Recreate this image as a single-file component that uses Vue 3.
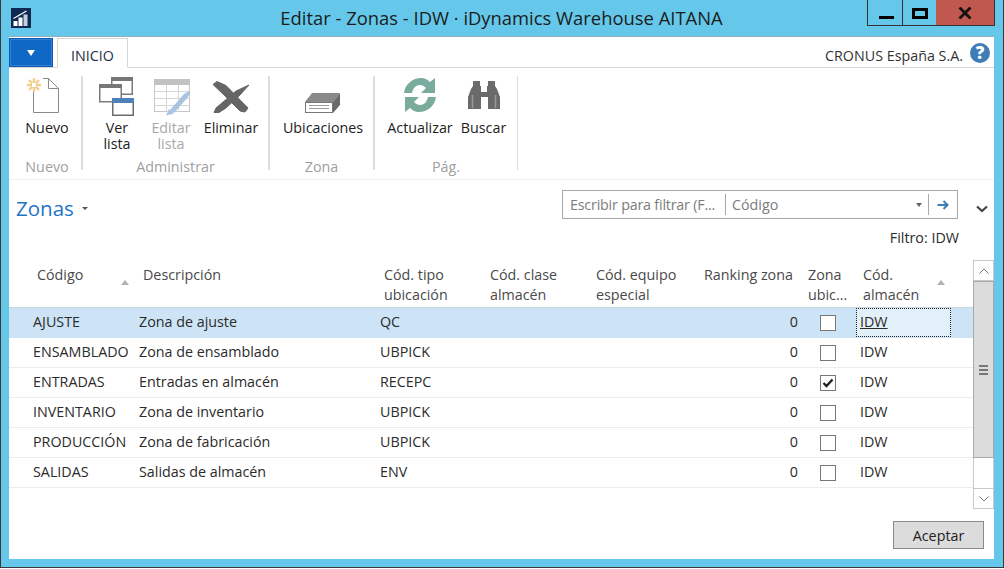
<script setup>
const columns = [
  { key: 'code', lines: ['Código'], sorted: true },
  { key: 'desc', lines: ['Descripción'] },
  { key: 'type', lines: ['Cód. tipo', 'ubicación'] },
  { key: 'class', lines: ['Cód. clase', 'almacén'] },
  { key: 'equip', lines: ['Cód. equipo', 'especial'] },
  { key: 'rank', lines: ['Ranking zona'] },
  { key: 'zone', lines: ['Zona', 'ubic...'] },
  { key: 'store', lines: ['Cód.', 'almacén'], sorted: true }
]

const rows = [
  { code: 'AJUSTE', desc: 'Zona de ajuste', type: 'QC', checked: false },
  { code: 'ENSAMBLADO', desc: 'Zona de ensamblado', type: 'UBPICK', checked: false },
  { code: 'ENTRADAS', desc: 'Entradas en almacén', type: 'RECEPC', checked: true },
  { code: 'INVENTARIO', desc: 'Zona de inventario', type: 'UBPICK', checked: false },
  { code: 'PRODUCCIÓN', desc: 'Zona de fabricación', type: 'UBPICK', checked: false },
  { code: 'SALIDAS', desc: 'Salidas de almacén', type: 'ENV', checked: false }
]
</script>

<template>
  <div class="window">
    <header class="titlebar">
      <svg class="app-icon" viewBox="0 0 20 20" width="20" height="20" aria-hidden="true">
        <rect width="20" height="20" fill="#0f2a52" />
        <path d="M2.500 18v-5h4v5zM7.500 18V9.500h4V18z" fill="#fff" />
        <path d="M12.500 18V6.500h4V18z" fill="#c3cfdd" />
        <path d="M2.500 10.500 15.500 3" stroke="#fff" stroke-width="1.200" fill="none" />
      </svg>
      <span class="title">Editar - Zonas - IDW · iDynamics Warehouse AITANA</span>
      <div class="win-buttons">
        <button type="button" class="win-btn win-min"><span></span></button>
        <button type="button" class="win-btn win-max"><span></span></button>
        <button type="button" class="win-btn win-close">
          <svg viewBox="0 0 14 12" width="14" height="12" aria-hidden="true">
            <path d="M1.500 0.500 12.500 11.500M12.500 0.500 1.500 11.500" stroke="#111" stroke-width="2.800" fill="none" />
          </svg>
        </button>
      </div>
    </header>

    <main class="client">
      <div class="tabstrip">
        <button type="button" class="file-btn"><i></i></button>
        <div class="tab">INICIO</div>
        <div class="company">CRONUS España S.A.</div>
        <div class="help">?</div>
      </div>

      <section class="ribbon">
        <div class="group group-new">
          <div class="group-items">
            <div class="cmd cmd-new">
              <svg viewBox="0 -2 34 40" width="34" height="40" aria-hidden="true">
                <path d="M16 .5H21.500L31.500 10.500V34.500H6.500V14" fill="#fff" stroke="#8a8a8a" />
                <path d="M21.500 .5V10.500H31.500" fill="none" stroke="#8a8a8a" />
                <path d="M7 0v14M0 7h14M2 2l10 10M12 2 2 12" stroke="#f3cf8f" stroke-width="2.400" fill="none" />
                <rect x="5" y="5" width="4" height="4" fill="#fff" />
              </svg>
              <span>Nuevo</span>
            </div>
          </div>
          <div class="group-label">Nuevo</div>
        </div>

        <div class="group group-admin">
          <div class="group-items">
            <div class="cmd cmd-view">
              <svg viewBox="0 0 36 40" width="36" height="40" aria-hidden="true">
                <path d="M12.750 1.750h20.500v16.500h-20.500z" fill="#fff" stroke="#7a7a7a" stroke-width="1.500" />
                <rect x="12" y="1" width="22" height="4" fill="#777" />
                <path d="M.75 8.750h21.500v17H.75z" fill="#fff" stroke="#7a7a7a" stroke-width="1.500" />
                <rect y="8" width="23" height="4" fill="#777" />
                <path d="M13.750 22.750h20.500v16.500h-20.500z" fill="#fff" stroke="#6d6d6d" stroke-width="1.500" />
                <rect x="13" y="22" width="22" height="5" fill="#4e81b8" />
              </svg>
              <span>Ver<br />lista</span>
            </div>
            <div class="cmd cmd-edit is-disabled">
              <svg viewBox="0 -2 38 40" width="38" height="40" aria-hidden="true">
                <rect x=".5" y="1.500" width="35" height="32" fill="#fff" stroke="#c6c6c6" />
                <rect x=".5" y="1" width="35" height="6" fill="#c2c2c2" />
                <path d="M1 13.500h35M1 20.500h35M1 27.500h35M12.500 7v27M24.500 7v27" stroke="#d6d6d6" fill="none" />
                <path d="M16 32 30 16 35 13 36.500 14.500 34 19 20 35z" fill="#a9c4e0" />
                <path d="M12 37.500 15 31 20 35.500z" fill="#a9c4e0" />
              </svg>
              <span>Editar<br />lista</span>
            </div>
            <div class="cmd cmd-delete">
              <svg viewBox="0 0 38 40" width="38" height="40" aria-hidden="true">
                <path d="M1 8.500 5 5.500 14 9.500 36 32 33 36 28 35 12 19z" fill="#666" stroke="#666" stroke-linejoin="round" />
                <path d="M37 9 24 15 4 32 2 36.500 7 36.500 14 32 27 20z" fill="#666" stroke="#666" stroke-linejoin="round" />
              </svg>
              <span>Eliminar</span>
            </div>
          </div>
          <div class="group-label">Administrar</div>
        </div>

        <div class="group group-zone">
          <div class="group-items">
            <div class="cmd cmd-loc">
              <svg viewBox="0 -17 36 40" width="36" height="40" aria-hidden="true">
                <path d="M7 0h28l-7 9H0z" fill="#8a8a8a" />
                <path d="M28 9l7-9v12l-7 8z" fill="#6a6a6a" />
                <rect x=".5" y="9.500" width="27" height="10" fill="#fff" stroke="#777" />
                <path d="M4 12.500h20M4 15.500h20" stroke="#999" fill="none" />
              </svg>
              <span>Ubicaciones</span>
            </div>
          </div>
          <div class="group-label">Zona</div>
        </div>

        <div class="group group-page">
          <div class="group-items">
            <div class="cmd cmd-refresh">
              <svg viewBox="0 -2 34 40" width="34" height="40" aria-hidden="true">
                <path d="M1 15C2 6 10 0 18 0c4 0 7 2 9 4l5-4v15H18l5-5c-2-2-4-3-6-3-4 0-7 3-8 8z" fill="#79ac9c" />
                <path d="M33 19c-1 9-9 15-17 15-4 0-7-2-9-4l-5 4V19h14l-5 5c2 2 4 3 6 3 4 0 7-3 8-8z" fill="#79ac9c" />
              </svg>
              <span>Actualizar</span>
            </div>
            <div class="cmd cmd-search">
              <svg viewBox="0 -4 34 40" width="34" height="40" aria-hidden="true">
                <path d="M6 1h7v5h1v6h6V6h1V1h7v5l2 3 3 8v12H21V17h-7v12H1V17l3-8 2-3z" fill="#6a6a6a" />
                <path d="M5.500 15v13M28.500 15v13" stroke="#9a9a9a" stroke-width="1.500" fill="none" />
              </svg>
              <span>Buscar</span>
            </div>
          </div>
          <div class="group-label">Pág.</div>
        </div>
      </section>

      <div class="page-head">
        <div class="page-title">Zonas <i></i></div>
        <div class="search">
          <span class="search-input">Escribir para filtrar (F...</span>
          <span class="search-field">Código</span>
          <i class="search-caret"></i>
          <span class="search-go">
            <svg viewBox="0 0 12 10" width="12" height="10" aria-hidden="true">
              <path d="M6.500 1 10.500 5 6.500 9M0.500 5H10" stroke="#3f7cb8" stroke-width="2" fill="none" />
            </svg>
          </span>
        </div>
        <svg class="collapse" viewBox="0 0 12 8" width="12" height="8" aria-hidden="true">
          <path d="M1 1.500 6 6l5-4.500" stroke="#444" stroke-width="2.200" fill="none" />
        </svg>
      </div>

      <div class="filter">Filtro: IDW</div>

      <div class="list">
        <div class="table">
          <div class="thead">
            <div v-for="col in columns" :key="col.key" class="th" :class="'col-' + col.key">
              <span class="th-text"><template v-for="(line, i) in col.lines" :key="i">{{ line }}<br v-if="i < col.lines.length - 1" /></template></span>
              <i v-if="col.sorted" class="sort"></i>
            </div>
          </div>
          <div v-for="(row, i) in rows" :key="row.code" class="tr" :class="{ selected: i === 0 }">
            <div class="td col-code">{{ row.code }}</div>
            <div class="td col-desc">{{ row.desc }}</div>
            <div class="td col-type">{{ row.type }}</div>
            <div class="td col-class"></div>
            <div class="td col-equip"></div>
            <div class="td col-rank">0</div>
            <div class="td col-zone">
              <span class="check">
                <svg v-if="row.checked" viewBox="0 0 12 10" width="12" height="10" aria-hidden="true">
                  <path d="M1.500 5 4.500 8 10.500 1.500" stroke="#222" stroke-width="2.400" fill="none" />
                </svg>
              </span>
            </div>
            <div class="td col-store"><span class="store" :class="{ current: i === 0 }">IDW</span></div>
          </div>
        </div>
        <div class="scrollbar">
          <div class="sb-btn">
            <svg viewBox="0 0 10 6" width="10" height="6" aria-hidden="true"><path d="M.5 5.500 5 1l4.500 4.500" stroke="#777" fill="none" /></svg>
          </div>
          <div class="sb-thumb"><i></i><i></i><i></i></div>
          <div class="sb-track"></div>
          <div class="sb-btn">
            <svg viewBox="0 0 10 6" width="10" height="6" aria-hidden="true"><path d="M.5.500 5 5 9.500.500" stroke="#777" fill="none" /></svg>
          </div>
        </div>
      </div>

      <div class="footer">
        <button type="button" class="ok">Aceptar</button>
      </div>
    </main>
  </div>
</template>

<style scoped>
.window {
  width: 1004px;
  height: 568px;
  box-sizing: border-box;
  display: flex;
  flex-direction: column;
  background: #65c8ea;
  border: 1px solid #3a3a3a;
  border-top: 0;
  padding: 0 9px 8px 8px;
  font-family: "Open Sans", "Noto Sans", sans-serif;
  font-size: 14.300px;
  color: #2b2b2b;
  overflow: hidden;
}

.titlebar {
  flex: 0 0 36px;
  display: grid;
  grid-template-columns: 1fr auto 1fr;
  align-items: start;
}

.app-icon {
  margin: 8px 0 0 2px;
}

.title {
  font-size: 18.400px;
  line-height: 36px;
  color: #1c1c1c;
  white-space: nowrap;
}

.win-buttons {
  justify-self: end;
  margin-right: -1px;
  display: flex;
  height: 26px;
  border: 1px solid #333;
  border-top: 0;
  box-sizing: border-box;
}

.win-btn {
  padding: 0;
  border: 0;
  background: transparent;
  display: flex;
  align-items: center;
  justify-content: center;
}

.win-min {
  width: 35px;
  border-right: 1px solid #333;
  align-items: flex-start;
  justify-content: flex-start;
}

.win-min span {
  width: 15px;
  height: 3px;
  background: #000;
  margin: 16px 0 0 11px;
}

.win-max {
  width: 33px;
}

.win-max span {
  width: 10px;
  height: 5px;
  border: 3px solid #000;
  margin-top: 2px;
}

.win-close {
  width: 58px;
  background: #c0584f;
}

.win-close svg {
  margin-top: 1px;
}

.client {
  flex: 1;
  min-height: 0;
  display: flex;
  flex-direction: column;
  background: #fff;
  border-top: 1px solid #8fb0c0;
}

.tabstrip {
  flex: 0 0 30px;
  display: flex;
  align-items: flex-start;
  border-bottom: 1px solid #d6d6d6;
  box-sizing: content-box;
}

.file-btn {
  width: 44px;
  height: 29px;
  padding: 0;
  margin-top: 1px;
  border: 1px solid #1257b0;
  background: #0f68c4;
  box-shadow: inset 0 0 0 1px #2f82d6;
  display: flex;
  align-items: center;
  justify-content: center;
}

.file-btn i {
  width: 0;
  height: 0;
  border-left: 4.500px solid transparent;
  border-right: 4.500px solid transparent;
  border-top: 6px solid #fff;
}

.tab {
  margin: 1px 0 -1px 4px;
  width: 71px;
  height: 30px;
  box-sizing: border-box;
  border: 1px solid #d6d6d6;
  border-bottom: 1px solid #fff;
  background: #fff;
  text-align: center;
  line-height: 34px;
  color: #1f2f45;
}

.company {
  margin-left: auto;
  padding-top: 9px;
  line-height: 20px;
  color: #333;
}

.help {
  width: 20px;
  height: 20px;
  margin: 6px 4px 0 7px;
  border-radius: 50%;
  background: #3f7cb8;
  color: #fff;
  font-weight: 800;
  font-size: 17px;
  line-height: 20px;
  text-align: center;
}

.ribbon {
  flex: 0 0 112px;
  display: flex;
  border-bottom: 1px solid #f0f0f0;
  padding-top: 8px;
  box-sizing: border-box;
}

.group {
  display: flex;
  flex-direction: column;
  height: 94px;
  border-right: 2px solid #dcdcdc;
  box-sizing: content-box;
}

.group-new { width: 72px; }
.group-admin { width: 185px; }
.group-zone { width: 103px; }
.group-page { width: 142px; border-right-width: 1px; }

.group-items {
  flex: 1;
  min-height: 0;
  display: flex;
  justify-content: center;
}

.group-admin .group-items { padding-left: 3px; }
.group-zone .group-items { padding-left: 3px; }
.group-page .group-items { padding-left: 5px; }

.group-label {
  flex: 0 0 14px;
  min-height: 0;
  text-align: center;
  color: #a0a0a0;
  line-height: 22px;
  white-space: nowrap;
}

.group-new .group-label { padding-left: 4px; }

.cmd {
  display: flex;
  flex-direction: column;
  align-items: center;
  text-align: center;
  line-height: 16px;
  color: #222;
  white-space: nowrap;
}

.cmd svg {
  margin-bottom: 4px;
  flex-shrink: 0;
}

.cmd-new { width: 72px; padding-left: 4px; box-sizing: border-box; }
.cmd-new svg { margin-left: -6px; }
.cmd-view { width: 52px; }
.cmd-edit { width: 56px; }
.cmd-edit svg { margin-left: 4px; }
.cmd-delete { width: 64px; }
.cmd-loc { width: 100px; }
.cmd-refresh { width: 70px; }
.cmd-search { width: 57px; }

.is-disabled { color: #a8a8a8; }

.page-head {
  flex: 0 0 48px;
  display: flex;
  align-items: flex-start;
  padding-left: 7px;
}

.page-title {
  margin-top: 14px;
  font-size: 20.500px;
  line-height: 28px;
  color: #1f73c4;
  display: flex;
  align-items: center;
  gap: 8px;
}

.page-title i {
  width: 0;
  height: 0;
  border-left: 3px solid transparent;
  border-right: 3px solid transparent;
  border-top: 3px solid #555;
}

.search {
  margin: 10px 0 0 auto;
  width: 396px;
  height: 29px;
  box-sizing: border-box;
  border: 1px solid #a8a8a8;
  display: flex;
  align-items: center;
  color: #7c7c7c;
}

.search-input {
  width: 163px;
  padding-left: 7px;
  box-sizing: border-box;
  white-space: nowrap;
  border-right: 1px solid #a8a8a8;
  line-height: 21px;
  letter-spacing: -0.2px;
}

.search-field {
  flex: 1;
  padding-left: 6px;
}

.search-caret {
  width: 0;
  height: 0;
  border-left: 3.500px solid transparent;
  border-right: 3.500px solid transparent;
  border-top: 4px solid #666;
  margin-right: 6px;
}

.search-go {
  width: 29px;
  height: 21px;
  box-sizing: border-box;
  border-left: 1px solid #a8a8a8;
  display: flex;
  align-items: center;
  justify-content: center;
}

.collapse {
  margin: 25px 6px 0 18px;
}

.filter {
  flex: 0 0 32px;
  text-align: right;
  padding-right: 35px;
  line-height: 20px;
}

.list {
  flex: 0 0 249px;
  display: flex;
}

.table {
  width: 964px;
}

.thead {
  height: 47px;
  display: flex;
  border-bottom: 1px solid #c8d6de;
  box-sizing: content-box;
}

.th {
  position: relative;
  padding: 5px 0 0 4px;
  line-height: 20px;
  color: #4a4a4a;
  box-sizing: border-box;
  white-space: nowrap;
}

.tr {
  height: 30px;
  display: flex;
  align-items: center;
  border-bottom: 1px solid #ececec;
  box-sizing: border-box;
}

.tr.selected {
  background: #cce4f6;
  border-bottom-color: #cce4f6;
}

.td {
  white-space: nowrap;
  color: #2b2b2b;
  box-sizing: border-box;
  padding-bottom: 2px;
}

.col-code { width: 130px; }
.td.col-code { padding-left: 24px; }
.th.col-code { padding-left: 28px; }
.col-desc { width: 241px; }
.col-type { width: 106px; }
.col-class { width: 106px; }
.col-equip { width: 102px; }
.col-rank { width: 105px; }
.th.col-rank { padding-left: 10px; }
.td.col-rank { text-align: right; padding-right: 1px; }
.col-zone { width: 56px; }
.th.col-zone { padding-left: 9px; }
.td.col-zone { display: flex; padding: 0 0 0 21px; }
.col-store { flex: 1; min-width: 0; }
.th.col-store { padding-left: 8px; }
.td.col-store { height: 100%; display: flex; padding-bottom: 0; }

.sort {
  position: absolute;
  top: 20px;
  width: 0;
  height: 0;
  border-left: 4.500px solid transparent;
  border-right: 4.500px solid transparent;
  border-bottom: 5px solid #b0b0b0;
}

.col-code .sort { right: 10px; }
.col-store .sort { right: 28px; }

.check {
  width: 16px;
  height: 16px;
  margin-top: 1px;
  box-sizing: border-box;
  border: 1px solid #777;
  background: #fff;
  display: flex;
  align-items: center;
  justify-content: center;
}

.store {
  flex: 1;
  padding: 0 0 2px 5px;
  margin-right: 22px;
  display: flex;
  align-items: center;
}

.store.current {
  margin-left: 1px;
  padding-left: 4px;
  background: #e2f0f9;
  outline: 1px dotted #222;
  outline-offset: -1px;
  text-decoration: underline;
}

.scrollbar {
  width: 21px;
  height: 249px;
  display: flex;
  flex-direction: column;
}

.sb-btn {
  flex: 0 0 21px;
  border: 1px solid #c8c8c8;
  box-sizing: border-box;
  display: flex;
  align-items: center;
  justify-content: center;
  background: #fff;
}

.sb-thumb {
  flex: 0 0 177px;
  background: #dcdcdc;
  border: 1px solid #a8a8a8;
  box-sizing: border-box;
  display: flex;
  flex-direction: column;
  align-items: center;
  justify-content: center;
  gap: 2px;
}

.sb-thumb i {
  width: 9px;
  height: 2px;
  background: #777;
}

.sb-track {
  flex: 1;
  border-left: 1px solid #c8c8c8;
  border-right: 1px solid #c8c8c8;
}

.footer {
  flex: 1;
  display: flex;
  justify-content: flex-end;
  align-items: flex-start;
  padding: 12px 10px 0 0;
}

.ok {
  width: 91px;
  height: 28px;
  border: 1px solid #8a8a8a;
  background: #dcdcdc;
  font: inherit;
  color: #222;
  padding: 0;
}
</style>
